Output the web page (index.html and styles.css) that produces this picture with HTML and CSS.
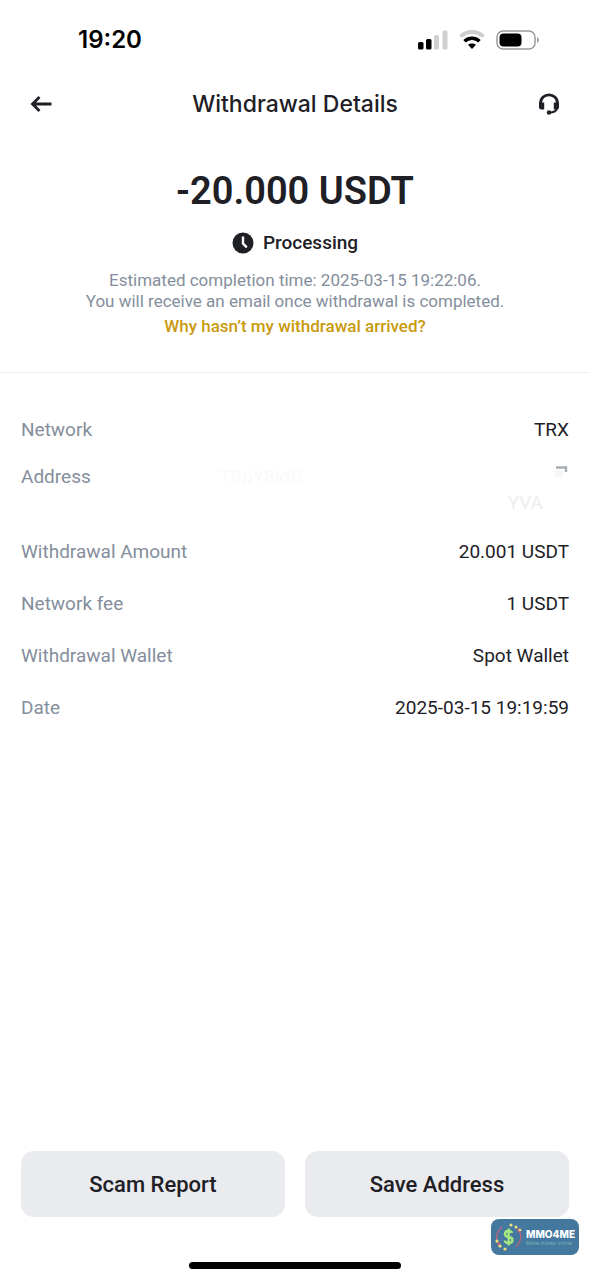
FILE: index.html
```html
<!DOCTYPE html>
<html lang="en">
<head>
<meta charset="utf-8">
<meta name="viewport" content="width=device-width, initial-scale=1">
<title>Withdrawal Details</title>
<link rel="stylesheet" href="styles.css">
</head>
<body>
<div class="screen">
  <div class="status-bar">
    <span class="clock">19:20</span>
    <div class="status-icons">
      <svg width="30" height="20" viewBox="0 0 30 20" aria-hidden="true">
        <rect x="0" y="12" width="5.500" height="7.500" rx="1.500"/>
        <rect x="8" y="9" width="5.500" height="10.500" rx="1.500"/>
        <rect x="16" y="5" width="5" height="14.500" rx="1.500" fill="#cfcfcf"/>
        <rect x="24.500" y="0.500" width="5" height="19" rx="1.500" fill="#cfcfcf"/>
      </svg>
      <svg width="26" height="20" viewBox="0 0 26 20" fill="none" aria-hidden="true">
        <path d="M1.500 6.500C8 .5 18 .5 24.500 6.500" stroke="#cfcfcf" stroke-width="4"/>
        <path d="M5.500 11.200C9.800 7.200 16.200 7.200 20.500 11.200" stroke="#000" stroke-width="3.600"/>
        <path d="M9 14.800C11.300 12.900 14.700 12.900 17 14.800L13 19Z" fill="#000"/>
      </svg>
      <svg width="44" height="20" viewBox="0 0 44 20" aria-hidden="true">
        <rect x="1" y="1" width="38" height="18" rx="6" fill="none" stroke="#9a9a9a" stroke-width="1.500"/>
        <rect x="3.500" y="3.500" width="22" height="13" rx="4"/>
        <path d="M41 7C43.500 8 43.500 12 41 13Z" fill="#9a9a9a"/>
      </svg>
    </div>
  </div>

  <header class="header">
    <button class="icon-button" type="button" aria-label="Back">
      <svg width="22" height="18" viewBox="0 0 22 18" fill="none" stroke="#1e2026" stroke-width="2.800" aria-hidden="true">
        <path d="M21.500 9H3M9.500 2L2.500 9L9.500 16"/>
      </svg>
    </button>
    <h1 class="title">Withdrawal Details</h1>
    <button class="icon-button" type="button" aria-label="Customer support">
      <svg width="22" height="22" viewBox="0 0 22 22" fill="none" aria-hidden="true">
        <path d="M2.500 10.500C2.500 -1 19.500 -1 19.500 10.500" stroke="#1e2026" stroke-width="2.800"/>
        <path d="M1 9.500H6.200V16.500H3.500Q1 16.500 1 14ZM15.800 9.500H21V14Q21 16.500 18.500 16.500H15.800Z" fill="#1e2026"/>
        <path d="M19.300 15Q18.500 19.200 11 19.800" stroke="#1e2026" stroke-width="2"/>
        <circle cx="11" cy="19.500" r="2.200" fill="#1e2026"/>
      </svg>
    </button>
  </header>

  <main class="content">
    <section class="summary">
      <p class="amount">-20.000 USDT</p>
      <p class="state">
        <svg width="22" height="22" viewBox="0 0 22 22" aria-hidden="true">
          <circle cx="11" cy="11" r="10.500" fill="#1e2026"/>
          <path d="M11 4.500V11.500L14.800 15.300" fill="none" stroke="#fff" stroke-width="2.400"/>
        </svg>
        <span>Processing</span>
      </p>
      <p class="note">Estimated completion time: 2025-03-15 19:22:06.<br>You will receive an email once withdrawal is completed.</p>
      <a class="help-link" href="#">Why hasn’t my withdrawal arrived?</a>
    </section>

    <dl class="details">
      <div class="row"><dt>Network</dt><dd>TRX</dd></div>
      <div class="row row-address">
        <dt>Address</dt>
        <dd class="address">
          <span class="address-text"><span class="address-start">TBpY8idD</span><span class="address-end">YVA</span></span>
          <svg width="14" height="14" viewBox="0 0 14 14" fill="none" aria-hidden="true">
            <path d="M1 3.500H11V8" stroke="#a9adb3" stroke-width="2.400"/>
            <rect x="0" y="6" width="8" height="7" fill="#f5f6f8"/>
          </svg>
        </dd>
      </div>
      <div class="row"><dt>Withdrawal Amount</dt><dd>20.001 USDT</dd></div>
      <div class="row"><dt>Network fee</dt><dd>1 USDT</dd></div>
      <div class="row"><dt>Withdrawal Wallet</dt><dd>Spot Wallet</dd></div>
      <div class="row"><dt>Date</dt><dd>2025-03-15 19:19:59</dd></div>
    </dl>
  </main>

  <footer class="footer">
    <div class="actions">
      <button class="action" type="button">Scam Report</button>
      <button class="action" type="button">Save Address</button>
    </div>
    <div class="home-indicator"></div>
  </footer>

  <div class="watermark">
    <svg width="30" height="30" viewBox="0 0 30 30" fill="none" aria-hidden="true">
      <path d="M8 5Q-1 13 5 23M23 6Q31 15 22 25" stroke="#b8657e" stroke-width="1.300"/>
      <path d="M2.500 20L5 23.500L6 20M24 10L25.500 7L28 9" stroke="#b8657e"/>
      <g fill="#f3e27c">
        <circle cx="17" cy="3" r="1.600"/><circle cx="22" cy="5" r="1.500"/><circle cx="26" cy="8" r="1.300"/>
        <circle cx="3" cy="19" r="1.500"/><circle cx="6" cy="24" r="1.600"/><circle cx="11" cy="27" r="1.600"/>
      </g>
      <path d="M18 11Q17.500 9 14.500 9Q11 9 11 12Q11 14.500 14.500 15Q18.500 15.500 18.500 18Q18.500 21 14.800 21Q11 21 10.800 18.500M14.700 6.500V23.500" stroke="#a6e77f" stroke-width="2.400"/>
    </svg>
    <div class="brand"><strong class="brand-name">MMO4ME</strong><span class="brand-tagline">Make money online</span></div>
  </div>
</div>
</body>
</html>
```
FILE: styles.css
```css
* {
  box-sizing: border-box;
}

body,
h1,
p,
dl,
dd {
  margin: 0;
}

body {
  background: #fff;
  color: #1e2026;
  font-family: Roboto, "Noto Sans", sans-serif;
}

button {
  border: 0;
  color: inherit;
  font-family: inherit;
  cursor: pointer;
}

svg {
  display: block;
  flex: none;
}

.screen {
  position: relative;
  display: flex;
  flex-direction: column;
  min-height: 100vh;
}

.status-bar {
  display: flex;
  align-items: center;
  justify-content: space-between;
  height: 80px;
  padding: 0 50px 0 78px;
  color: #000;
}

.clock {
  font: 600 24px/30px Inter, sans-serif;
}

.status-icons {
  display: flex;
  align-items: center;
  gap: 11px;
}

.header {
  display: flex;
  align-items: center;
  justify-content: space-between;
  height: 48px;
  padding: 0 20px;
}

.icon-button {
  display: grid;
  place-items: center;
  width: 42px;
  height: 42px;
  padding: 0;
  background: none;
}

.title {
  font: 500 23px/32px Inter, sans-serif;
}

.content {
  flex: 1;
}

.summary {
  display: flex;
  flex-direction: column;
  align-items: center;
  padding: 38px 20px 35px;
  border-bottom: 1px solid #eeeff1;
  text-align: center;
}

.amount {
  font-size: 38px;
  font-weight: 600;
  line-height: 50px;
}

.state {
  display: flex;
  align-items: center;
  gap: 9px;
  margin-top: 14px;
  font-size: 19px;
  font-weight: 500;
  line-height: 26px;
}

.note {
  margin-top: 14px;
  color: #848e9c;
  font-size: 17px;
  line-height: 21px;
}

.help-link {
  margin-top: 3px;
  color: #c99a0d;
  font-size: 17px;
  font-weight: 500;
  line-height: 22px;
  text-decoration: none;
}

.details {
  padding: 44px 21px 24px;
  font-size: 19px;
  line-height: 26px;
}

.row {
  display: flex;
  justify-content: space-between;
  gap: 20px;
}

.row + .row {
  margin-top: 26px;
}

.row + .row-address {
  margin-top: 21px;
}

.row-address + .row {
  margin-top: 23px;
}

.row dt {
  color: #848e9c;
}

.address {
  display: flex;
  flex: 0 1 350px;
  gap: 12px;
}

.address-text {
  display: flex;
  flex: 1;
  flex-direction: column;
}

.address-start {
  color: #fafafa;
}

.address-end {
  align-self: flex-end;
  color: #eeeeee;
}

.footer {
  padding: 0 21px 11px;
}

.actions {
  display: grid;
  grid-template-columns: 1fr 1fr;
  gap: 20px;
}

.action {
  height: 66px;
  border-radius: 13px;
  background: #eaebef;
  font-size: 22px;
  font-weight: 500;
}

.home-indicator {
  width: 212px;
  height: 7px;
  margin: 45px auto 0;
  border-radius: 4px;
  background: #000;
}

.watermark {
  position: absolute;
  right: 11px;
  bottom: 25px;
  display: flex;
  align-items: center;
  gap: 2px;
  width: 88px;
  height: 36px;
  padding: 0 3px;
  border-radius: 8px;
  background: #44789e;
  color: #fff;
  font-family: Inter, sans-serif;
}

.brand {
  display: flex;
  flex-direction: column;
  white-space: nowrap;
}

.brand-name {
  font-size: 10px;
  font-weight: 800;
  line-height: 12px;
}

.brand-tagline {
  color: #79b2b9;
  font-size: 5px;
  line-height: 6px;
}
```
